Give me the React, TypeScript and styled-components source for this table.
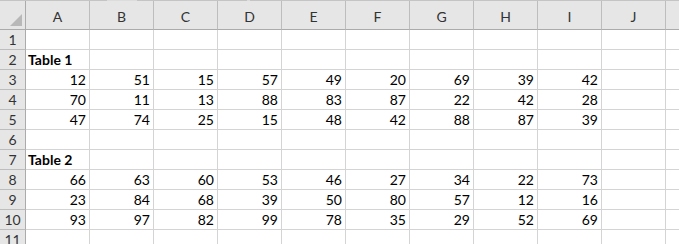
import React from "react";
import styled, { createGlobalStyle } from "styled-components";

const GlobalStyle = createGlobalStyle`
  html, body {
    margin: 0;
    padding: 0;
    background: #ffffff;
  }
  body {
    font-family: Lato, "Open Sans", "Liberation Sans", sans-serif;
    overflow: hidden;
  }
`;

// K is only partly in view, its letter falls past the window edge
const columns = ["A", "B", "C", "D", "E", "F", "G", "H", "I", "J", ""];

type Cell = string | number | null;

const rows: { bold?: boolean; cells: Cell[] }[] = [
  { cells: [] },
  { bold: true, cells: ["Table 1"] },
  { cells: [12, 51, 15, 57, 49, 20, 69, 39, 42] },
  { cells: [70, 11, 13, 88, 83, 87, 22, 42, 28] },
  { cells: [47, 74, 25, 15, 48, 42, 88, 87, 39] },
  { cells: [] },
  { bold: true, cells: ["Table 2"] },
  { cells: [66, 63, 60, 53, 46, 27, 34, 22, 73] },
  { cells: [23, 84, 68, 39, 50, 80, 57, 12, 16] },
  { cells: [93, 97, 82, 99, 78, 35, 29, 52, 69] },
  { cells: [] },
];

export default function App() {
  return (
    <>
      <GlobalStyle />
      <Sheet>
        <TopEdge />
        <Grid>
          <Corner>
            <CornerTriangle />
          </Corner>
          {columns.map((c, i) => (
            <ColHeader key={i}>{c}</ColHeader>
          ))}
          {rows.map((row, r) => (
            <React.Fragment key={r}>
              <RowHeader>{r + 1}</RowHeader>
              {columns.map((_, i) => {
                const v = row.cells[i];
                const isLabel = typeof v === "string";
                return (
                  <DataCell
                    key={i}
                    $align={isLabel ? "left" : "right"}
                    $bold={!!row.bold}
                    $overflow={isLabel}
                  >
                    {v ?? ""}
                  </DataCell>
                );
              })}
            </React.Fragment>
          ))}
        </Grid>
      </Sheet>
    </>
  );
}

const Sheet = styled.div`
  width: 679px;
  height: 244px;
  overflow: hidden;
  background: #ffffff;
`;

const TopEdge = styled.div`
  height: 1px;
  background: linear-gradient(
    to right,
    #c4c4c4 0px,
    #c4c4c4 107px,
    #dcdcdc 107px,
    #dcdcdc 137px,
    #c4c4c4 137px,
    #c4c4c4 247px,
    #dcdcdc 247px,
    #dcdcdc 250px,
    #c4c4c4 250px
  );
`;

const Grid = styled.div`
  display: grid;
  grid-template-columns: 26px repeat(11, 64px);
  grid-template-rows: 29px repeat(11, 20px);
`;

const Corner = styled.div`
  position: relative;
  box-sizing: border-box;
  background: #e6e6e6;
  border-right: 1px solid #ababab;
  border-bottom: 1px solid #ababab;
`;

const CornerTriangle = styled.div`
  position: absolute;
  right: 3px;
  bottom: 3px;
  width: 0;
  height: 0;
  border-left: 12px solid transparent;
  border-bottom: 12px solid #b8b8b8;
`;

const ColHeader = styled.div`
  box-sizing: border-box;
  background: #e6e6e6;
  border-right: 1px solid #bdbdbd;
  border-bottom: 1px solid #ababab;
  display: flex;
  align-items: flex-end;
  justify-content: center;
  padding-bottom: 4px;
  font-size: 14px;
  color: #333333;
`;

const RowHeader = styled.div`
  box-sizing: border-box;
  background: #e6e6e6;
  border-right: 1px solid #ababab;
  border-bottom: 1px solid #bdbdbd;
  display: flex;
  align-items: flex-end;
  justify-content: center;
  padding-bottom: 1px;
  font-size: 14px;
  color: #333333;
`;

const DataCell = styled.div<{
  $align: "left" | "right";
  $bold: boolean;
  $overflow: boolean;
}>`
  box-sizing: border-box;
  border-right: 1px solid #d4d4d4;
  border-bottom: 1px solid #d4d4d4;
  display: flex;
  align-items: flex-end;
  justify-content: ${(p) => (p.$align === "left" ? "flex-start" : "flex-end")};
  padding: 0 3px 1px 2px;
  font-size: 14px;
  font-weight: ${(p) => (p.$bold ? 700 : 400)};
  color: #000000;
  white-space: nowrap;
  overflow: ${(p) => (p.$overflow ? "visible" : "hidden")};
  line-height: 17px;
`;
